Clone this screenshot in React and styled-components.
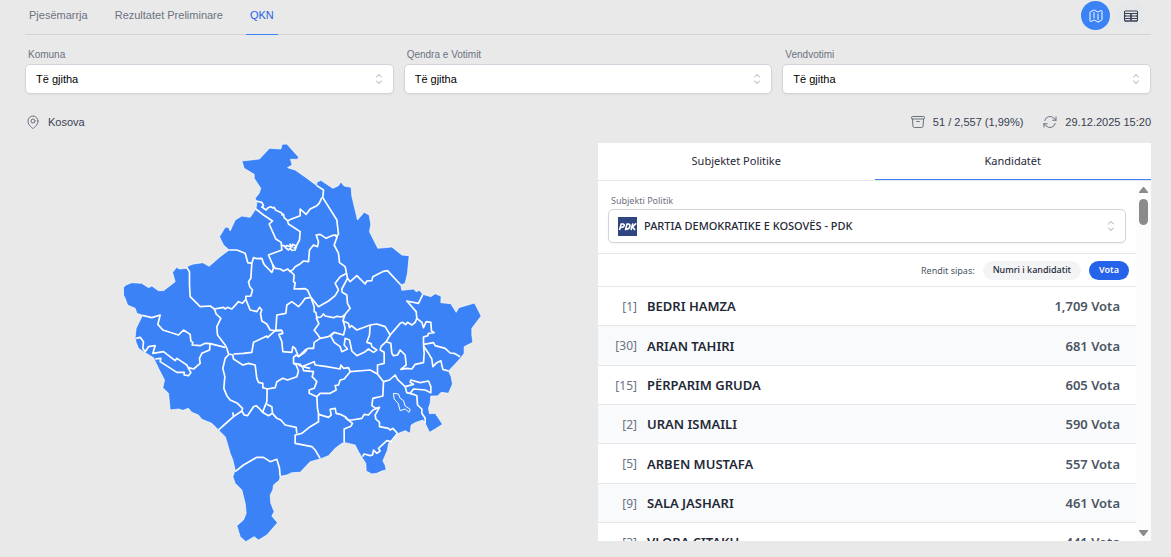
import React, { useState } from "react";
import styled, { createGlobalStyle } from "styled-components";
import {
  HiOutlineMap,
  HiOutlineTableCells,
  HiOutlineMapPin,
  HiOutlineArchiveBox,
  HiOutlineArrowPath,
  HiChevronUpDown,
} from "react-icons/hi2";

const GlobalStyle = createGlobalStyle`
  * {
    box-sizing: border-box;
  }

  body {
    margin: 0;
    background-color: #e9e9e9;
    font-family: "Liberation Sans", Arial, sans-serif;
    font-size: 11px;
    color: #1f2937;
  }

  button, select {
    font: inherit;
    color: inherit;
    cursor: pointer;
  }
`;

const Page = styled.main`
  padding: 0 20px 15px 25px;
`;

const TopBar = styled.header`
  display: flex;
  justify-content: space-between;
  height: 35px;
  border-bottom: 1px solid #d1d5db;
`;

const Tabs = styled.nav`
  display: flex;
  gap: 19px;
`;

const Tab = styled.button`
  height: 35px;
  padding: 0 4px 4px;
  border: 0;
  border-bottom: 1px solid ${({ $active }) => ($active ? "#3b82f6" : "transparent")};
  background: none;
  color: ${({ $active }) => ($active ? "#2563eb" : "#6b7280")};
`;

const ViewButtons = styled.div`
  display: flex;
  gap: 6px;
  padding: 1px 6px 0 0;
`;

const ViewButton = styled.button`
  display: flex;
  align-items: center;
  justify-content: center;
  width: 29px;
  height: 29px;
  padding: 0;
  border: 0;
  border-radius: 50%;
  font-size: 16px;
  background-color: ${({ $active }) => ($active ? "#3b82f6" : "#e5e7eb")};
  color: ${({ $active }) => ($active ? "#ffffff" : "#374151")};
`;

const Filters = styled.div`
  display: grid;
  grid-template-columns: repeat(3, 1fr);
  gap: 10px;
  padding-top: 14px;
`;

const Field = styled.div`
  .label {
    display: block;
    padding-left: 3px;
    margin-bottom: 3px;
    font-size: 10px;
    line-height: 12px;
    color: #6b7280;
  }
`;

const SelectBox = styled.div`
  display: flex;
  align-items: center;
  position: relative;
  height: ${({ $tall }) => ($tall ? "34px" : "30px")};
  padding-left: ${({ $tall }) => ($tall ? "9px" : "0")};
  border: 1px solid #d1d5db;
  border-radius: 5px;
  background-color: #fff;
  box-shadow: 0 1px 2px rgba(0, 0, 0, 0.05);

  select {
    flex: 1;
    min-width: 0;
    height: 100%;
    padding: ${({ $tall }) => ($tall ? "0 28px 2px 7px" : "0 28px 0 10px")};
    border: 0;
    appearance: none;
    background: none;
    font-weight: ${({ $tall }) => ($tall ? 500 : 400)};
    color: ${({ $tall }) => ($tall ? "#1f2937" : "#000")};
  }

  .chevron {
    position: absolute;
    right: 6px;
    font-size: 16px;
    color: #b6bac2;
    pointer-events: none;
  }
`;

const InfoRow = styled.div`
  display: flex;
  justify-content: space-between;
  align-items: center;
  height: 29px;
  margin-top: 13px;
  color: #374151;
`;

const InfoGroup = styled.div`
  display: flex;
  gap: 19px;
`;

const Info = styled.span`
  display: flex;
  align-items: center;
  gap: 7px;

  svg {
    font-size: 16px;
    color: #6b7280;
  }
`;

const Content = styled.div`
  display: grid;
  grid-template-columns: 1fr 1fr;
  gap: 20px;
  margin-top: 7px;
`;

const MapArea = styled.div`
  display: flex;
  justify-content: center;

  svg {
    width: 100%;
    height: 400px;
  }
`;

const Panel = styled.section`
  height: 398px;
  display: flex;
  flex-direction: column;
  background-color: #fff;
  font-family: "Noto Sans", sans-serif;
  overflow: hidden;
`;

const PanelTabs = styled.div`
  display: grid;
  grid-template-columns: 1fr 1fr;
  flex: none;
  border-bottom: 1px solid #e5e7eb;
`;

const PanelTab = styled.button`
  height: 37px;
  padding: 0 0 2px;
  border: 0;
  border-bottom: 1px solid ${({ $active }) => ($active ? "#3b82f6" : "transparent")};
  background: none;
`;

const PanelBody = styled.div`
  display: flex;
  flex: 1;
  min-height: 0;
`;

const Scrolled = styled.div`
  flex: 1;
  overflow: hidden;
`;

const PartyField = styled(Field)`
  padding: 14px 10px 10px;
  border-bottom: 1px solid #e5e7eb;

  .label {
    margin-bottom: 2px;
    font-size: 9px;
  }
`;

const SortRow = styled.div`
  display: flex;
  align-items: center;
  justify-content: flex-end;
  gap: 8px;
  height: 33px;
  padding-right: 7px;
  border-bottom: 1px solid #e5e7eb;
  font-size: 9px;
  color: #4b5563;
`;

const Pill = styled.button`
  height: 19px;
  padding: 0 10px 1px;
  border: 0;
  border-radius: 10px;
  font-weight: ${({ $active }) => ($active ? 600 : 500)};
  background-color: ${({ $active }) => ($active ? "#2563eb" : "#f3f4f6")};
  color: ${({ $active }) => ($active ? "#ffffff" : "#1f2937")};
`;

const Candidates = styled.table`
  width: 100%;
  border-collapse: separate;
  border-spacing: 0;
  font-size: 13px;

  td {
    height: 39px;
    padding: 0;
    border-bottom: 1px solid #e5e7eb;
  }

  tr:nth-child(3n + 2) td {
    height: 40px;
  }

  tr:nth-child(even) {
    background-color: #f9fafb;
  }

  .number {
    width: 39px;
    text-align: right;
    font-size: 12px;
    color: #6b7280;
  }

  .name {
    padding-left: 10px;
    font-weight: 600;
  }

  .votes {
    padding-right: 16px;
    text-align: right;
    font-weight: 600;
    color: #4b5563;
  }
`;

const ScrollBar = styled.div`
  display: flex;
  flex-direction: column;
  align-items: center;
  width: 15px;
  padding: 5px 0 4px;
  background-color: #fcfcfc;

  .thumb {
    width: 9px;
    height: 26px;
    margin-top: 5px;
    margin-bottom: auto;
    border-radius: 5px;
    background-color: #8b8b8b;
  }
`;

const LAND =
  "M395 78L448 72 478 40 512 42 516 28 530 27 565 66 563 73 541 73 546 90 532 98 555 105 585 126 620 152 620 142 632 136 668 160 685 152 692 141 702 153 723 157 725 183 742 255 762 232 777 240 782 268 778 290 803 340 845 336 875 360 897 362 892 415 885 445 872 450 875 466 910 462 918 470 928 466 938 478 962 485 975 476 993 484 992 503 1022 506 1038 532 1046 518 1093 504 1113 543 1085 580 1085 600 1088 622 1062 635 1062 655 1052 668 1037 685 1015 708 1023 725 1027 747 1015 775 993 772 982 783 962 783 960 805 955 820 958 836 975 835 982 845 997 868 975 882 958 892 945 865 938 855 915 863 903 870 900 895 885 887 865 895 850 915 835 925 832 945 818 978 825 990 828 1005 815 1008 800 1015 785 1017 768 1008 767 985 757 970 745 950 735 930 705 923 695 925 675 940 655 962 630 972 600 980 570 1012 545 1013 530 1020 510 1024 508 1035 490 1050 488 1065 480 1080 482 1105 492 1130 485 1143 502 1163 470 1200 445 1215 432 1205 407 1220 390 1205 380 1172 400 1155 408 1135 405 1105 395 1065 375 1045 368 1025 375 1005 368 975 360 955 350 920 345 905 325 885 305 865 275 853 265 840 245 832 235 820 218 826 205 822 180 825 177 795 175 775 158 758 163 735 145 700 130 668 100 650 85 640 77 620 75 605 78 580 97 541 80 535 75 520 52 510 45 490 40 480 40 458 47 450 65 443 95 445 115 458 125 453 145 467 160 467 195 440 187 412 200 397 208 402 230 400 235 392 250 387 278 383 297 394 330 365 357 345 340 330 328 305 345 277 355 277 360 288 375 255 395 243 420 247 437 222 440 205 435 190 447 175 452 160 432 130 432 118 402 100Z";

const BORDERS = [
  "M437 198L455 202 460 212 455 216 468 225 474 218 482 215 488 219 492 217 497 226 514 233 516 240 520 238 522 248 532 257 550 250 570 242 570 222 588 238 600 222 620 212 627 205 635 188",
  "M620 152L640 165 638 188 680 255 685 298 675 305",
  "M437 222L460 240 487 258 477 267 497 312 513 322 515 345 475 360 488 390 495 400 510 402 520 408 533 402 540 410 548 404",
  "M532 257L535 267 570 290 568 315 560 330 555 345 545 346 540 340 535 345 525 337 530 332 545 336 547 328 557 332M513 330L526 334M538 326L543 332M550 340L558 336",
  "M357 345L380 345 405 355 413 383 425 385 430 368 440 371 455 370 460 385 465 392 475 402 485 412 490 400 487 388",
  "M425 385L422 430 415 440 419 455 427 465 422 483 407 484 407 495",
  "M230 398L238 410 238 450 240 485 270 515 300 513 313 522 340 517 345 522 352 517 365 522 385 500 397 505 407 493",
  "M407 493L420 525 440 530 448 517 455 525 451 535 455 558 470 567 480 585 495 587 515 585",
  "M313 522L318 537 332 550 320 575 322 600 345 630 350 640 355 657",
  "M97 541L125 548 150 540 143 568 158 585 205 600 220 585 240 598 242 618 248 622 246 630 270 632 285 625 300 626 345 637",
  "M548 404L555 395 568 388 580 378 595 380 598 345 610 330 622 335 625 320 618 300 630 298 648 310 665 302 675 300 681 305 672 330 685 355 688 383 705 395 712 430 720 440 740 422 752 434 765 447 770 438 785 437 788 425 820 409 832 407 872 450",
  "M540 408L552 420 550 440 555 443 552 462 585 461 592 465 602 487 585 490 575 504 565 515 545 500 530 510 527 535 500 540 497 585",
  "M602 487L625 515 655 498 675 482 682 470 685 465 675 445 690 425 710 415",
  "M712 430L695 462 696 472 710 480 712 505 720 520 705 538 695 546 680 544 670 548 645 543 640 537 632 546 620 548 617 532 612 530 612 515 602 487",
  "M618 548L626 566 612 586 622 598 630 610",
  "M705 538L698 558 715 565 718 578 724 572 740 585 780 570 800 567 825 575 840 600 870 565 878 562 886 569 892 562 905 570 915 562 920 550 918 530 890 498 925 505 938 478",
  "M920 550L935 562 940 578 948 560 962 562 964 588 972 593 955 595 953 602 940 606 940 628 942 655 940 683 915 688 905 702 890 700 872 703 882 695 888 690 885 660 870 645 862 660 850 662 845 655 842 625 828 620 812 635",
  "M840 600L828 620",
  "M940 628L970 623 975 632 1005 640 1020 654 1032 655 1050 665",
  "M940 633L955 655 965 672 968 695 980 683 992 677 998 703 1015 708",
  "M780 570L778 600 770 622 783 626 785 635 800 645 790 652 775 642 765 650 740 662 725 648 718 615 705 610 702 630 712 642 695 650 690 635 672 622 662 603 672 592 700 600 705 580 700 560",
  "M672 592L655 605 630 610 612 622 610 640 595 640 585 645 565 665 558 660 550 667 550 685 570 688 575 695 612 680 615 690 650 695 690 702 692 690 700 700 715 698 720 710 780 705 802 717 820 740 838 735 855 720 862 733 885 755",
  "M812 635L810 645 822 652 822 685 802 690 802 717",
  "M820 740L818 783 788 790 785 812 797 820 808 817 795 840 797 852 808 862 808 875 835 880 840 885 848 880 862 895",
  "M578 697L580 707 610 710 606 725 620 740 612 760 597 765 597 775 620 785 622 820 625 835 625 860 600 875 575 895 555 900 555 925 605 935 615 945 630 970",
  "M620 785L630 775 660 775 678 765 675 752 685 750 690 735 702 732 720 710",
  "M625 838L655 847 663 840 660 823 675 820 678 835 690 838 705 845 715 855 725 855 755 850 762 838 775 840 788 825 808 817",
  "M705 848L727 865 722 874 702 882 702 923",
  "M757 965L762 957 780 962 787 960 790 945 800 955 810 948 805 940 830 917 842 920 862 895",
  "M885 755L890 773 910 778 920 782 922 810 935 822 935 835 945 850 945 865",
  "M885 755L910 748 900 742 902 735 930 743 955 738 962 755 962 773 945 765 910 762 900 775",
  "M78 610L90 607 100 620 98 640 105 650 115 635 135 632 128 655 160 650 195 677 200 670 215 680 230 690 242 713 235 722 222 720 222 712 200 712 150 680 152 670 135 672",
  "M236 698L250 702 270 685 268 670 275 655 298 645 300 625",
  "M357 657L345 670 338 700 344 725 341 760 350 782 360 795 382 805 397 820 395 828 370 845 368 832M370 845L345 867 325 885",
  "M395 828L402 840 412 842 430 815 438 812 447 820 457 832 470 800 471 762 458 758 458 745 445 742 440 730 435 690 415 685 398 690 370 672 368 660 357 657",
  "M370 657L400 655 425 652 430 622 470 603 472 608 495 587",
  "M457 832L475 842 487 835 485 815 470 808M487 835L500 850 512 855 525 870 558 877 560 895",
  "M471 762L495 758 500 740 518 730 532 735 560 725 565 708 558 690 550 685",
  "M495 587L515 587 518 595 506 598 515 620 518 650 545 652 548 635 555 640 565 665",
  "M565 665L580 655 590 645M565 690L578 695 600 700",
  "M375 1010L400 990 440 967 460 967 480 980 500 973 508 1000 510 1024",
];

const LAKE =
  "M850 775L865 777 870 790 880 797 885 813 900 823 897 832 885 822 870 827 864 805 852 792Z";

const CANDIDATES = [
  { number: 1, name: "BEDRI HAMZA", votes: "1,709" },
  { number: 30, name: "ARIAN TAHIRI", votes: "681" },
  { number: 15, name: "PËRPARIM GRUDA", votes: "605" },
  { number: 2, name: "URAN ISMAILI", votes: "590" },
  { number: 5, name: "ARBEN MUSTAFA", votes: "557" },
  { number: 9, name: "SALA JASHARI", votes: "461" },
  { number: 3, name: "VLORA ÇITAKU", votes: "441" },
];

const SelectField = ({ id, label }) => (
  <Field>
    <label className="label" htmlFor={id}>{label}</label>
    <SelectBox>
      <select id={id}>
        <option>Të gjitha</option>
      </select>
      <HiChevronUpDown className="chevron" />
    </SelectBox>
  </Field>
);

const KosovoMap = () => (
  <svg viewBox="27 24 1094 1200" role="img" aria-label="Kosova">
    <path d={LAND} fill="#3b82f6" stroke="#ffffff" strokeWidth="2" />
    <g fill="none" stroke="#ffffff" strokeWidth="5" strokeLinejoin="round">
      {BORDERS.map((d) => (
        <path key={d} d={d} />
      ))}
      <path d={LAKE} strokeWidth="3" />
    </g>
  </svg>
);

const PdkLogo = () => (
  <svg width="19" height="19" viewBox="0 0 19 19" aria-hidden="true">
    <rect width="19" height="19" fill="#2f4580" />
    <g fill="none" stroke="#fff" strokeWidth="1.6">
      <path d="M1.5 13L3.2 7H5.2Q6.8 7.4 6 9.2Q5.2 10.6 2.6 10.4" />
      <path d="M7.6 12.4L9 7H10.4Q12.8 7.6 11.6 10.2Q10.6 12.4 7.6 12.4Z" />
      <path d="M13 13L14.8 6.4M18.2 6.4L14.4 9.8L17 13" />
    </g>
  </svg>
);

const App = () => {
  const [tab, setTab] = useState("QKN");
  const [view, setView] = useState("map");
  const [panelTab, setPanelTab] = useState("Kandidatët");
  const [sort, setSort] = useState("Vota");

  return (
    <>
      <GlobalStyle />
      <Page>
        <TopBar>
          <Tabs>
            {["Pjesëmarrja", "Rezultatet Preliminare", "QKN"].map((v) => (
              <Tab key={v} $active={tab === v} onClick={() => setTab(v)}>{v}</Tab>
            ))}
          </Tabs>
          <ViewButtons>
            <ViewButton aria-label="Harta" $active={view === "map"} onClick={() => setView("map")}>
              <HiOutlineMap />
            </ViewButton>
            <ViewButton aria-label="Tabela" $active={view === "table"} onClick={() => setView("table")}>
              <HiOutlineTableCells />
            </ViewButton>
          </ViewButtons>
        </TopBar>

        <Filters>
          <SelectField id="komuna" label="Komuna" />
          <SelectField id="qendra" label="Qendra e Votimit" />
          <SelectField id="vendvotimi" label="Vendvotimi" />
        </Filters>

        <InfoRow>
          <Info><HiOutlineMapPin />Kosova</Info>
          <InfoGroup>
            <Info><HiOutlineArchiveBox />51 / 2,557 (1,99%)</Info>
            <Info><HiOutlineArrowPath />29.12.2025 15:20</Info>
          </InfoGroup>
        </InfoRow>

        <Content>
          <MapArea>
            <KosovoMap />
          </MapArea>

          <Panel>
            <PanelTabs>
              {["Subjektet Politike", "Kandidatët"].map((v) => (
                <PanelTab key={v} $active={panelTab === v} onClick={() => setPanelTab(v)}>{v}</PanelTab>
              ))}
            </PanelTabs>
            <PanelBody>
              <Scrolled>
                <PartyField>
                  <label className="label" htmlFor="subjekti">Subjekti Politik</label>
                  <SelectBox $tall>
                    <PdkLogo />
                    <select id="subjekti">
                      <option>PARTIA DEMOKRATIKE E KOSOVËS - PDK</option>
                    </select>
                    <HiChevronUpDown className="chevron" />
                  </SelectBox>
                </PartyField>
                <SortRow>
                  <span>Rendit sipas:</span>
                  {["Numri i kandidatit", "Vota"].map((v) => (
                    <Pill key={v} $active={sort === v} onClick={() => setSort(v)}>{v}</Pill>
                  ))}
                </SortRow>
                <Candidates>
                  <tbody>
                    {CANDIDATES.map(({ number, name, votes }) => (
                      <tr key={number}>
                        <td className="number">[{number}]</td>
                        <td className="name">{name}</td>
                        <td className="votes">{votes} Vota</td>
                      </tr>
                    ))}
                  </tbody>
                </Candidates>
              </Scrolled>
              <ScrollBar aria-hidden="true">
                <svg width="9" height="8" viewBox="0 0 9 8">
                  <path d="M4 1H5L9 6V7H0V6Z" fill="#8b8b8b" />
                </svg>
                <div className="thumb" />
                <svg width="9" height="8" viewBox="0 0 9 8">
                  <path d="M0 1H9V2L5 7H4L0 2Z" fill="#8b8b8b" />
                </svg>
              </ScrollBar>
            </PanelBody>
          </Panel>
        </Content>
      </Page>
    </>
  );
};

export default App;
